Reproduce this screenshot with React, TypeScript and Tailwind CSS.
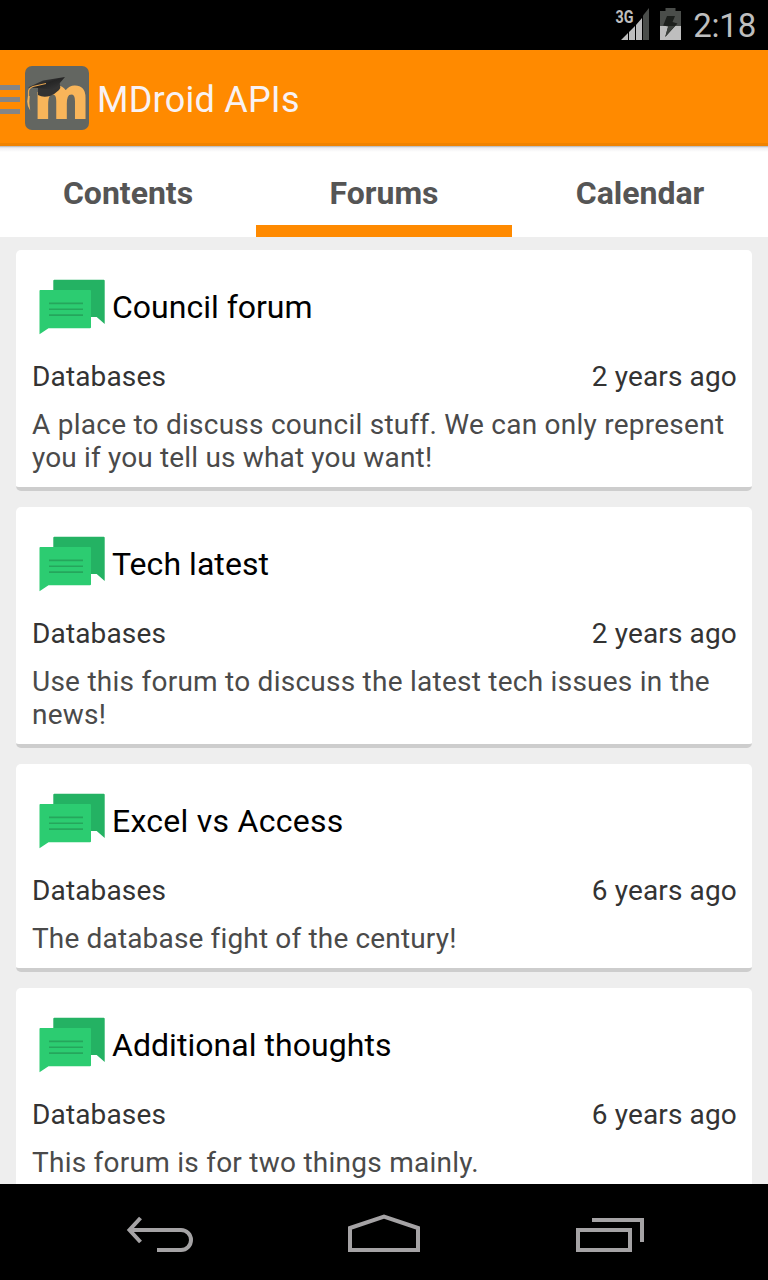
const forums = [
  { title: 'Council forum', age: '2 years ago', lines: ['A place to discuss council stuff. We can only represent', 'you if you tell us what you want!'], titleTracking: 'tracking-normal' },
  { title: 'Tech latest', age: '2 years ago', lines: ['Use this forum to discuss the latest tech issues in the', 'news!'], titleTracking: 'tracking-[0.05px]' },
  { title: 'Excel vs Access', age: '6 years ago', lines: ['The database fight of the century!'], titleTracking: 'tracking-[0.27px]' },
  { title: 'Additional thoughts', age: '6 years ago', lines: ['This forum is for two things mainly.'], titleTracking: 'tracking-[0.05px]' },
];

function ForumIcon() {
  return (
    <svg className="h-20 w-20 shrink-0" viewBox="0 0 80 80">
      <path d="M22.3 13.7h49.4q1 0 1 1V58l-8-7H21.3V14.7q0-1 1-1z" fill="#24b263" />
      <path d="M8.3 24h49.7q1 0 1 1v36.3q0 1-1 1H16.5L7.5 68.3V25q0-1 .8-1z" fill="#2ccc71" />
      <path d="M17 37.4h34M17 43.3h34M17 49.1h34" stroke="#25a65c" strokeWidth="1.6" />
    </svg>
  );
}

function ForumCard({ forum }: { forum: (typeof forums)[number] }) {
  return (
    <article className="shrink-0 rounded-[5px] border-b-4 border-[#cdcdcd] bg-white px-4 pt-4 pb-[13px]">
      <div className="flex h-[82px] items-start">
        <ForumIcon />
        <h2 className={`mt-[22px] text-[32px] leading-[38px] text-black ${forum.titleTracking}`}>{forum.title}</h2>
      </div>
      <div className="mt-3 -mr-px flex justify-between text-[28px] leading-[33px] tracking-[0.15px] text-[#333]">
        <span>Databases</span>
        <span>{forum.age}</span>
      </div>
      <p className="mt-[15px] text-[28px] leading-[33px] tracking-[0.25px] text-[#4a4a4a]">
        {forum.lines.map((line) => (
          <span key={line} className={line.startsWith('The') || line.startsWith('you') ? 'block whitespace-nowrap tracking-[0.16px]' : 'block whitespace-nowrap'}>{line}</span>
        ))}
      </p>
    </article>
  );
}

function StatusBar() {
  return (
    <div className="flex h-[50px] shrink-0 items-center justify-end bg-black pr-3">
      <svg className="h-[50px] w-[36px]" viewBox="615 0 36 50">
        <text x="616.5" y="23" fontSize="18" fontWeight="700" textLength="18" lengthAdjust="spacingAndGlyphs" fill="#bebebe">3G</text>
        <path d="M622 40l7-7V40zM630 32l6-6v14h-6zM637 25l6-7v22h-6z" fill="#bebebe" />
        <path d="M644 15.500l6-7.500v32h-6z" fill="#4a4d4a" />
      </svg>
      <svg className="ml-2.5 h-[50px] w-[21px]" viewBox="661 0 21 50">
        <path d="M661 11h5.500V8h10v3h5.500v15h-21z" fill="#4a4d4a" />
        <path d="M661 26h21v14h-21z" fill="#bebebe" />
        <path d="M668 16h8l-2.500 6 5 1.500-12.300 13.500 3-10.500-5-1z" fill="#1c1f1c" />
        <path d="M669.200 26l-3 11 9.500-11z" fill="#3c403c" />
      </svg>
      <span className="ml-3 pt-[2px] text-[33px] leading-[50px] tracking-[-0.2px] text-[#bebebe]">2:18</span>
    </div>
  );
}

function AppLogo() {
  return (
    <svg className="ml-[5px] h-16 w-16 overflow-visible" viewBox="25 66 64 64">
      <defs>
        <linearGradient id="cap" x1="0" y1="0" x2="1" y2="1">
          <stop offset="0" stopColor="#555" />
          <stop offset="0.5" stopColor="#252525" />
          <stop offset="1" stopColor="#3c3c3c" />
        </linearGradient>
      </defs>
      <rect x="25" y="66" width="64" height="64" rx="7" fill="#636661" />
      <text x="34" y="119" fontFamily="Open Sans" fontSize="60" fontWeight="800" textLength="55" lengthAdjust="spacingAndGlyphs" fill="#f8b55a">m</text>
      <path d="M35 83h12v9h-12z" fill="#636661" />
      <path d="M38 87l17-4 4-3 1 5q1 3-1 5-4 4-9 6-7 2-12-1z" fill="#343332" />
      <path d="M28 87.500L43 80.500 65 77 54 90 38 88z" fill="url(#cap)" />
      <path d="M46 83.500L33 86.500q-5 2-4.500 6v6" fill="none" stroke="#e8a752" strokeWidth="1.200" />
      <path d="M28 96h1.700q-1 7 .5 14.500-3-4-3-9z" fill="#f2b45d" />
    </svg>
  );
}

export default function App() {
  return (
    <div className="flex h-[1280px] w-[768px] flex-col overflow-hidden bg-[#eee] font-['Roboto',sans-serif]">
      <StatusBar />
      <header className="flex h-24 shrink-0 items-center border-b-[3px] border-[#f08200] bg-[#ff8a00] pt-[3px]">
        <div className="mt-0.5 flex w-5 flex-col gap-[7px]">
          <i className="h-[5px] bg-[#858585]" />
          <i className="h-[5px] bg-[#858585]" />
          <i className="h-[5px] bg-[#858585]" />
        </div>
        <AppLogo />
        <h1 className="mt-1 ml-2 text-[36px] leading-[42px] tracking-[0.25px] text-[#f8f2f4]">MDroid APIs</h1>
      </header>
      <nav className="flex h-[91px] shrink-0 flex-col bg-white">
        <div className="h-1.5 shrink-0 bg-linear-to-b from-[#b0b0b0] via-[#eeecf0] via-30% to-white" />
        <div className="grid h-[85px] grid-cols-3 text-center text-[32px] leading-[38px] font-bold text-[#555]">
          <span className="pt-[22px]">Contents</span>
          <span className="border-b-12 border-[#ff8a00] pt-[22px]">Forums</span>
          <span className="pt-[22px]">Calendar</span>
        </div>
      </nav>
      <main className="flex min-h-0 flex-1 flex-col gap-4 overflow-hidden px-4 pt-[13px]">
        {forums.map((forum) => <ForumCard key={forum.title} forum={forum} />)}
      </main>
      <footer className="flex h-24 shrink-0 justify-center bg-black">
        <svg className="h-24 w-[768px]" viewBox="0 1184 768 96" fill="none" stroke="#a5a3a5" strokeWidth="4">
          <path d="M130 1230h51a10 10 0 0 1 0 20h-24" />
          <path d="M140.500 1218l-11 12 11 12" />
          <path d="M350 1250v-22l34-11.500 34 11.500v22z" />
          <path d="M578 1230h52v20h-52zM592 1220h50v22" />
        </svg>
      </footer>
    </div>
  );
}
